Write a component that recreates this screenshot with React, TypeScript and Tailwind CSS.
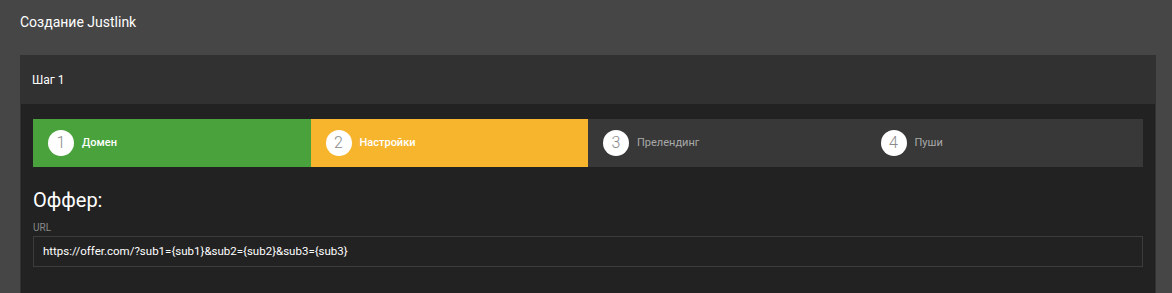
const steps = [
  { n: 1, label: 'Домен', state: 'done' },
  { n: 2, label: 'Настройки', state: 'active' },
  { n: 3, label: 'Прелендинг', state: 'todo' },
  { n: 4, label: 'Пуши', state: 'todo' }
];

const stepBg: Record<string, string> = {
  done: 'bg-[#4aa23c] text-white font-medium',
  active: 'bg-[#f7b52d] text-white font-medium',
  todo: 'bg-[#383838] text-[#a9a9a9]'
};

const App = () => {
  return (
    <div className="min-h-screen w-full bg-[#464646] font-['Roboto',sans-serif]">
      <div className="px-5 pt-[10px] pb-[21px]">
        <h1 className="text-[14px] leading-[24px] text-white">Создание Justlink</h1>
      </div>
      <div className="ml-5 mr-4 bg-[#313131]">
        <div className="flex h-[49px] items-center px-3 text-[12px] text-white">Шаг 1</div>
        <div className="mx-px bg-[#222222] px-3 pt-[15px] pb-8">
          <div className="grid h-12 grid-cols-4">
            {steps.map((step) => (
              <div key={step.n} className={`flex items-center pl-[15px] ${stepBg[step.state]}`}>
                <span className="flex h-[26px] w-[26px] items-center justify-center rounded-full bg-white text-[16px] font-light text-[#8a8a8a]">
                  {step.n}
                </span>
                <span className="ml-2 text-[11px]">{step.label}</span>
              </div>
            ))}
          </div>
          <h2 className="mt-[21px] text-[20px] leading-[24px] text-white">Оффер:</h2>
          <label className="mt-[10px] block text-[10px] leading-[12px] text-[#8a8a8a]">URL</label>
          <div className="mt-[2px] flex h-[31px] items-center border border-[#3c3c3c] px-[9px] text-[11.5px] text-white">
            https://offer.com/?sub1={'{sub1}'}&amp;sub2={'{sub2}'}&amp;sub3={'{sub3}'}
          </div>
        </div>
      </div>
    </div>
  );
};

export default App;
